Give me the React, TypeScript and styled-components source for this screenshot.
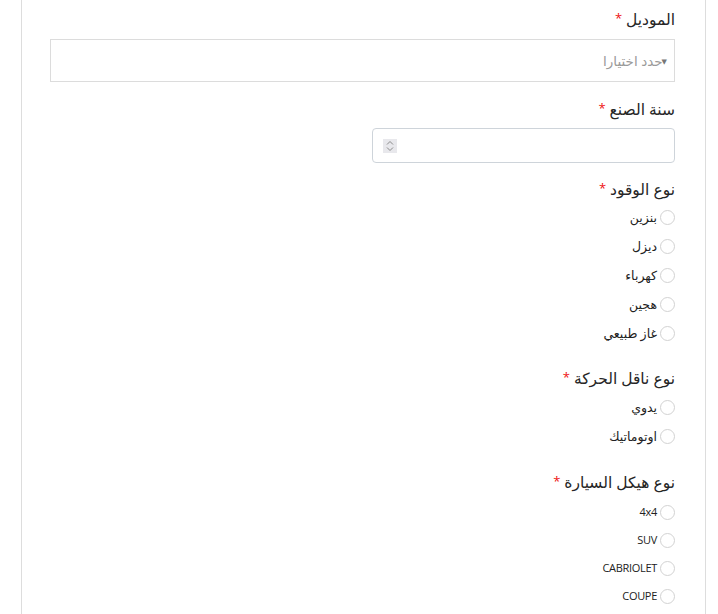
import React from "react";
import styled, { createGlobalStyle } from "styled-components";

const GlobalStyle = createGlobalStyle`
  html, body { margin: 0; padding: 0; background: #ffffff; }
  body {
    font-family: "Open Sans", "DejaVu Sans", sans-serif;
    color: #333333;
  }
`;

const Panel = styled.div`
  direction: rtl;
  margin-left: 21px;
  width: 685px;
  min-height: 614px;
  box-sizing: border-box;
  border-left: 1px solid #dddddd;
  border-right: 1px solid #dddddd;
  padding: 8px 30px 0 28px;
`;

const Group = styled.div<{ $gap: number }>`
  margin-bottom: ${(p) => p.$gap}px;
`;

const Label = styled.div<{ $mb: number }>`
  display: flex;
  align-items: center;
  height: 22px;
  font-size: 15.5px;
  color: #262626;
  margin-bottom: ${(p) => p.$mb}px;
`;

const Star = styled.span`
  color: #ee1111;
  margin-right: 4px;
  margin-bottom: 1px;
  font-size: 13px;
  line-height: 13px;
`;

const SelectBox = styled.div`
  height: 43px;
  box-sizing: border-box;
  border: 1px solid #dcdcdc;
  display: flex;
  align-items: center;
  padding-right: 7px;
  font-size: 13.5px;
  color: #9a9a9a;
`;

const Caret = styled.span`
  font-size: 7px;
  color: #777;
  margin-left: -1px;
  margin-top: 2px;
`;

const NumberBox = styled.div`
  width: 303px;
  height: 35px;
  box-sizing: border-box;
  border: 1px solid #ced4da;
  border-radius: 4px;
  display: flex;
  align-items: center;
  justify-content: flex-end;
  padding-left: 10px;
`;

const Spinner = styled.span`
  width: 14px;
  height: 14px;
  background: #e8e8ec;
  display: flex;
  align-items: center;
  justify-content: center;
`;

const Options = styled.div``;

const Option = styled.label<{ $latin?: boolean }>`
  display: flex;
  align-items: center;
  height: ${(p) => (p.$latin ? "28px" : "29px")};
  font-size: ${(p) => (p.$latin ? "11px" : "12.5px")};
  letter-spacing: ${(p) => (p.$latin ? "-0.3px" : "0")};
  color: #222222;
`;

const OptionText = styled.span<{ $latin?: boolean }>`
  margin-top: ${(p) => (p.$latin ? "-3px" : "0")};
`;

const Circle = styled.span`
  width: 15px;
  height: 15px;
  box-sizing: border-box;
  border: 1px solid #d2d2d2;
  border-radius: 50%;
  background: #ffffff;
  margin-left: 3px;
  flex: none;
`;

type RadioProps = { label: string; options: string[]; gap: number; mb: number };

const RadioGroup = ({ label, options, gap, mb }: RadioProps) => (
  <Group $gap={gap}>
    <Label $mb={mb}>
      {label}
      <Star>*</Star>
    </Label>
    <Options>
      {options.map((o) => {
        const latin = /^[A-Za-z0-9]/.test(o);
        return (
          <Option key={o} $latin={latin}>
            <Circle />
            <OptionText $latin={latin}>{o}</OptionText>
          </Option>
        );
      })}
    </Options>
  </Group>
);

export default function App() {
  return (
    <>
      <GlobalStyle />
      <Panel>
        <Group $gap={16}>
          <Label $mb={9}>
            الموديل<Star>*</Star>
          </Label>
          <SelectBox>
            <Caret>▼</Caret>
            حدد اختيارا
          </SelectBox>
        </Group>
        <Group $gap={15}>
          <Label $mb={8}>
            سنة الصنع<Star>*</Star>
          </Label>
          <NumberBox>
            <Spinner>
              <svg width="8" height="12" viewBox="0 0 8 12">
                <path d="M1 4.5 L4 1.5 L7 4.5" fill="none" stroke="#8a8a8a" strokeWidth="1" />
                <path d="M1 7.5 L4 10.5 L7 7.5" fill="none" stroke="#8a8a8a" strokeWidth="1" />
              </svg>
            </Spinner>
          </NumberBox>
        </Group>
        <RadioGroup
          label="نوع الوقود"
          options={["بنزين", "ديزل", "كهرباء", "هجين", "غاز طبيعي"]}
          gap={19.5}
          mb={2.5}
        />
        <RadioGroup label="نوع ناقل الحركة" options={["يدوي", "اوتوماتيك"]} gap={20} mb={3.5} />
        <RadioGroup
          label="نوع هيكل السيارة"
          options={["4x4", "SUV", "CABRIOLET", "COUPE"]}
          gap={0}
          mb={6}
        />
      </Panel>
    </>
  );
}
